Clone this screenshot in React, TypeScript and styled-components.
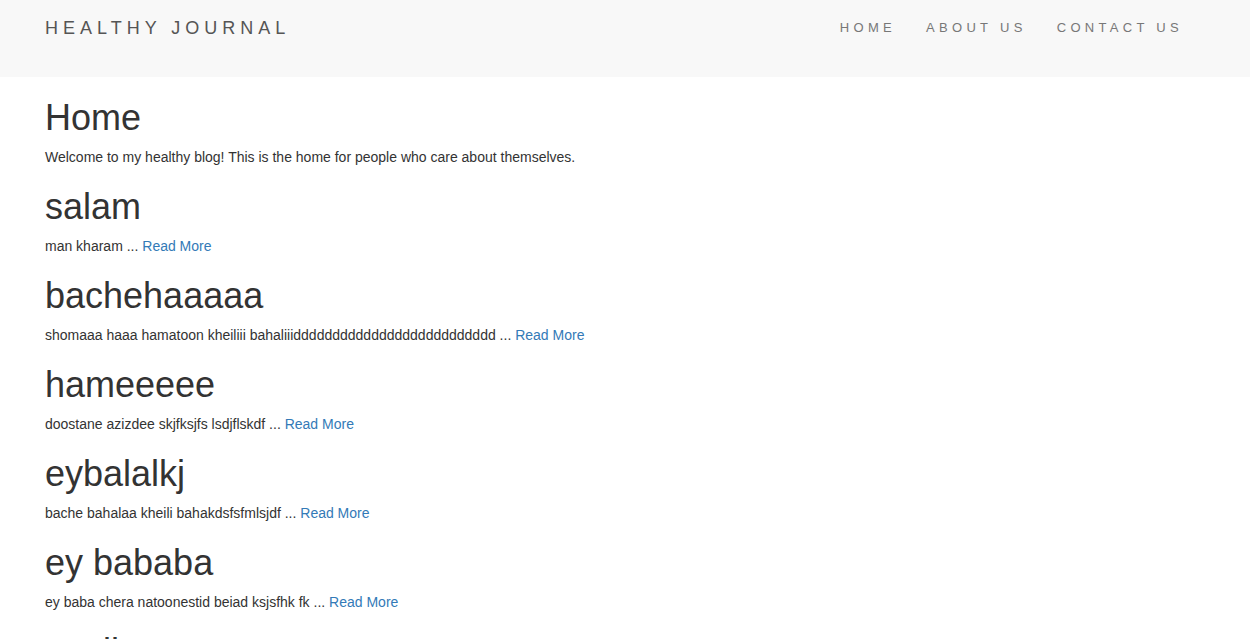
import React from "react";
import styled, { createGlobalStyle } from "styled-components";

const Global = createGlobalStyle`
  html, body { margin: 0; padding: 0; background: #fff; }
  body {
    font-family: "Liberation Sans", Arial, Helvetica, sans-serif;
    font-size: 14px;
    line-height: 20px;
    color: #333;
  }
  * { box-sizing: border-box; }
`;

const NavBar = styled.header`
  height: 77px;
  background: #f8f8f8;
  display: flex;
  align-items: flex-start;
  justify-content: space-between;
  padding: 0 52px 0 45px;
`;

const Brand = styled.a`
  font-size: 18px;
  letter-spacing: 5px;
  color: #555;
  text-decoration: none;
  line-height: 20px;
  padding-top: 18px;
`;

const NavList = styled.ul`
  list-style: none;
  margin: 0;
  padding: 0;
  display: flex;
`;

const NavLink = styled.a`
  display: block;
  font-size: 13px;
  letter-spacing: 4.3px;
  color: #777;
  text-decoration: none;
  line-height: 20px;
  padding: 18px 15px 0 15px;
`;

const Main = styled.main`
  padding: 1px 45px 0;
  overflow: hidden;
`;

const Title = styled.h1`
  font-size: 36px;
  font-weight: 500;
  line-height: 39px;
  margin: 20px 0 10px;
  color: #333;
`;

const Text = styled.p`
  margin: 0 0 10px;
`;

const More = styled.a`
  color: #337ab7;
  text-decoration: none;
`;

const posts = [
  { title: "salam", body: "man kharam" },
  { title: "bachehaaaaa", body: "shomaaa haaa hamatoon kheiliii bahaliii" + "d".repeat(26) },
  { title: "hameeeee", body: "doostane azizdee skjfksjfs lsdjflskdf" },
  { title: "eybalalkj", body: "bache bahalaa kheili bahakdsfsfmlsjdf" },
  { title: "ey bababa", body: "ey baba chera natoonestid beiad ksjsfhk fk" },
  { title: "saall", body: "salam" },
];

export default function App() {
  return (
    <>
      <Global />
      <NavBar>
        <Brand href="#">HEALTHY JOURNAL</Brand>
        <NavList>
          <li><NavLink href="#">HOME</NavLink></li>
          <li><NavLink href="#">ABOUT US</NavLink></li>
          <li><NavLink href="#">CONTACT US</NavLink></li>
        </NavList>
      </NavBar>
      <Main>
        <Title>Home</Title>
        <Text>Welcome to my healthy blog! This is the home for people who care about themselves.</Text>
        {posts.map((p) => (
          <article key={p.title}>
            <Title>{p.title}</Title>
            <Text>
              {p.body} ... <More href="#">Read More</More>
            </Text>
          </article>
        ))}
      </Main>
    </>
  );
}
